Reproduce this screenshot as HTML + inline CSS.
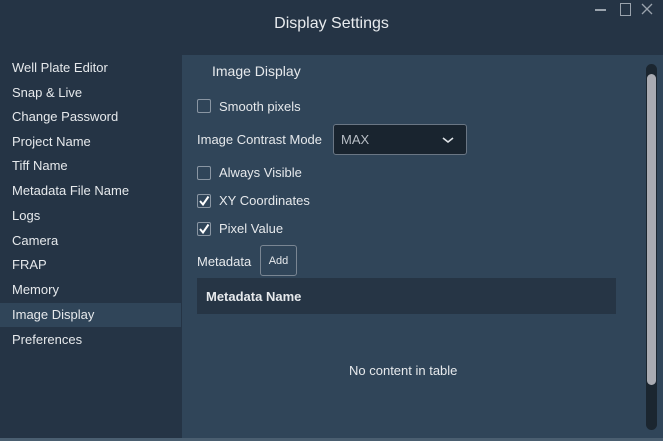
<!DOCTYPE html><html><head><style>
body{margin:0;width:663px;height:441px;background:#253445;font-family:"Liberation Sans",sans-serif;color:#e6e9ec;position:relative;overflow:hidden;font-size:13px}
.a{position:absolute;white-space:nowrap}
.side div{position:absolute;left:0;width:181px;height:24px;line-height:24px;padding-left:12px;box-sizing:border-box}
.cb{position:absolute;left:197px;width:14px;height:14px;border:1px solid #8a96a3;border-radius:2px;box-sizing:border-box}
</style></head><body>
<div class="a" style="left:0;top:15px;width:663px;text-align:center;font-size:16px;color:#e8ebee">Display Settings</div>
<div class="a" style="left:595px;top:9px;width:11px;height:2px;background:#9aa3ad"></div>
<div class="a" style="left:620px;top:3px;width:9px;height:11px;border:1px solid #9aa3ad"></div>
<svg class="a" style="left:641px;top:3px" width="12" height="12"><path d="M1 1l10 10M11 1L1 11" stroke="#9aa3ad" stroke-width="1.3"/></svg>
<div class="side">
<div style="top:56px">Well Plate Editor</div>
<div style="top:81px">Snap &amp; Live</div>
<div style="top:105px">Change Password</div>
<div style="top:130px">Project Name</div>
<div style="top:154px">Tiff Name</div>
<div style="top:179px">Metadata File Name</div>
<div style="top:204px">Logs</div>
<div style="top:229px">Camera</div>
<div style="top:253px">FRAP</div>
<div style="top:278px">Memory</div>
<div style="top:303px;background:#304559">Image Display</div>
<div style="top:328px">Preferences</div>
</div>
<div class="a" style="left:182px;top:55px;width:481px;height:383px;background:#304559"></div>
<div class="a" style="left:0;top:438px;width:663px;height:3px;background:#4a5e70"></div>
<div class="a" style="left:212px;top:63px;font-size:14px">Image Display</div>
<div class="cb" style="top:99px"></div><div class="a" style="left:219px;top:99px">Smooth pixels</div>
<div class="a" style="left:197px;top:132px">Image Contrast Mode</div>
<div class="a" style="left:333px;top:124px;width:134px;height:31px;background:#19242f;border:1px solid #6a7684;border-radius:3px;box-sizing:border-box"></div>
<div class="a" style="left:341px;top:132px;color:#b8bec5">MAX</div>
<svg class="a" style="left:441px;top:135px" width="14" height="10"><path d="M2 3l5 4 5-4" stroke="#dfe3e7" stroke-width="1.6" fill="none"/></svg>
<div class="cb" style="top:166px"></div><div class="a" style="left:219px;top:165px">Always Visible</div>
<div class="cb" style="top:194px"></div><div class="a" style="left:219px;top:193px">XY Coordinates</div>
<div class="cb" style="top:222px"></div><div class="a" style="left:219px;top:221px">Pixel Value</div>
<svg class="a" style="left:197px;top:194px" width="14" height="14"><path d="M3 7l3 3.5 5.5-8" stroke="#fff" stroke-width="2" fill="none"/></svg>
<svg class="a" style="left:197px;top:222px" width="14" height="14"><path d="M3 7l3 3.5 5.5-8" stroke="#fff" stroke-width="2" fill="none"/></svg>
<div class="a" style="left:197px;top:254px">Metadata</div>
<div class="a" style="left:260px;top:245px;width:37px;height:31px;border:1px solid #7a8693;border-radius:3px;box-sizing:border-box;text-align:center;line-height:31px;font-size:11px">Add</div>
<div class="a" style="left:197px;top:278px;width:419px;height:36px;background:#263545"></div>
<div class="a" style="left:206px;top:289px;font-weight:bold">Metadata Name</div>
<div class="a" style="left:349px;top:363px">No content in table</div>
<div class="a" style="left:646px;top:64px;width:11px;height:366px;background:#1b2630;border-radius:6px"></div>
<div class="a" style="left:647px;top:74px;width:9px;height:311px;background:#a9abb2;border-radius:5px"></div>
</body></html>
